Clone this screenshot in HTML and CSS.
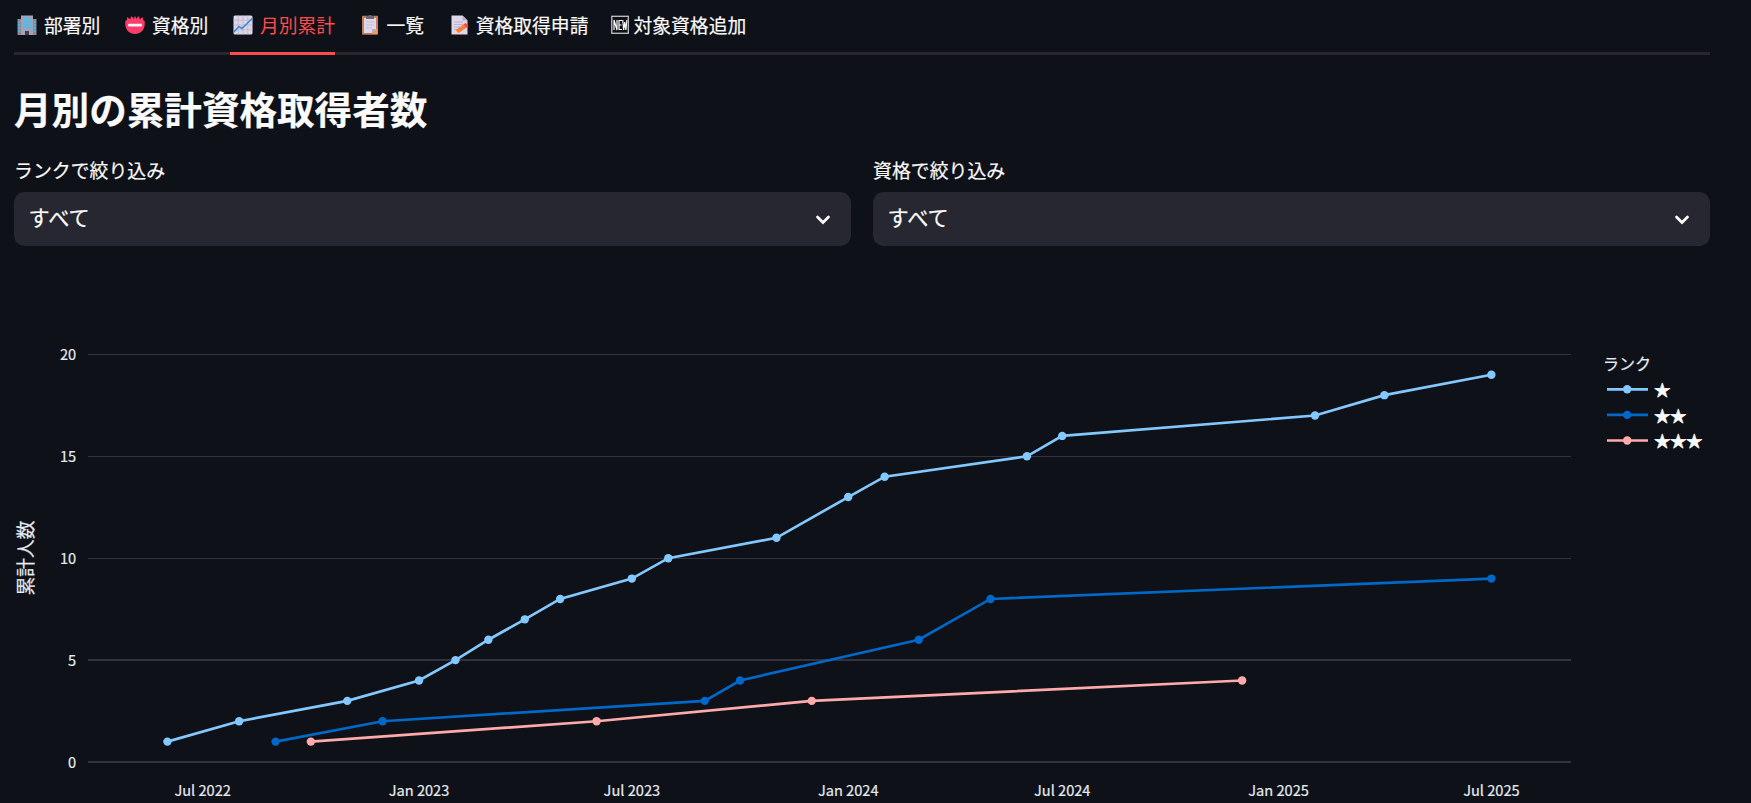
FILE: index.html
```html
<!DOCTYPE html>
<html lang="ja">
<head>
    <meta charset="UTF-8">
    <title>月別の累計資格取得者数</title>
    <link rel="stylesheet" href="styles.css">
</head>
<body>
    <nav class="tabs">
        <div class="tab">
            <svg class="icon" viewBox="0 0 20 20">
                <rect x="0.5" y="4" width="19" height="16" fill="#8b8794"/>
                <rect x="4" y="0.5" width="12" height="19.5" fill="#a7a0b3"/>
                <path d="M1 6h2v2H1zM1 9h2v2H1zM1 12h2v2H1zM1 15h2v2H1zM17 6h2v2h-2zM17 9h2v2h-2zM17 12h2v2h-2zM17 15h2v2h-2z" fill="#40b6e8"/>
                <path d="M6 2.5h2.2v2H6zM9 2.5h2.2v2H9zM12 2.5h2.2v2H12zM6 5.5h2.2v2H6zM9 5.5h2.2v2H9zM12 5.5h2.2v2H12zM6 8.5h2.2v2H6zM9 8.5h2.2v2H9zM12 8.5h2.2v2H12zM6 11.5h2.2v2H6zM9 11.5h2.2v2H9zM12 11.5h2.2v2H12z" fill="#35c5fb"/>
                <rect x="8" y="16" width="4" height="4" fill="#483852"/>
            </svg>
            部署別
        </div>
        <div class="tab">
            <svg class="icon" viewBox="0 0 20 20">
                <path d="M0.300 6 1.800 5.200 2.200 2 5 4.300 6.600 1 8.600 3.800 10 1l1.400 2.800L13.400 1 15 4.300 17.800 2l.4 3.200 1.500.8v4C19 15.500 15.500 19 10 19S1 15.500.300 10z" fill="#fb3d6b"/>
                <rect x="3" y="8.700" width="14" height="2.800" rx="1" fill="#fff0fa"/>
            </svg>
            資格別
        </div>
        <div class="tab tab-active">
            <svg class="icon" viewBox="0 0 20 20">
                <rect x="0.500" y="0.500" width="19" height="19" rx="1.500" fill="#ddd5e8"/>
                <path d="M5.200 0.500v19M10 0.500v19M14.800 0.500v19M0.500 5.200h19M0.500 10h19M0.500 14.800h19" stroke="#bcb1cb" stroke-width="0.700"/>
                <path d="M0.800 17 6 11.500l3 2L19.200 3.500" fill="none" stroke="#348fda" stroke-width="1.700"/>
            </svg>
            月別累計
        </div>
        <div class="tab">
            <svg class="icon" viewBox="0 0 20 20">
                <rect x="2" y="0.800" width="16" height="19" rx="1" fill="#c47c5b"/>
                <path d="M4 3h12v11l-4 4H4z" fill="#ded7ea"/>
                <path d="M12 18v-4h4z" fill="#b9abc9"/>
                <path d="M12 18.500 17.500 13v6H12z" fill="#ed9c5c"/>
                <path d="M6 7h8M6 10h8M6 13h6" stroke="#c7bdd4"/>
                <path d="M6 1h2.500L9 0h2l.5 1H14v3H6z" fill="#6f6672"/>
            </svg>
            一覧
        </div>
        <div class="tab">
            <svg class="icon icon-memo" viewBox="0 0 20 20">
                <path d="M1.500 0.500h11l5 5v14h-16z" fill="#ded6e9"/>
                <path d="M12.500 0.500v5h5z" fill="#b9aec9"/>
                <path d="M4 7h9M4 9.500h9M4 12h6M4 14.500h4" stroke="#bdb2cc"/>
                <path d="m4.500 19 1.200-4 3 3z" fill="#ffd0a0"/>
                <path d="m5.700 15 8.800-6.200 2.500 3.400L8.700 18z" fill="#fa7d3c"/>
                <path d="m13.700 9.400 2-1.700 2.800 3.500-2.100 1.500z" fill="#f24f40"/>
            </svg>
            資格取得申請
        </div>
        <div class="tab">
            <svg class="icon icon-new" viewBox="0 0 18 20">
                <rect x="0.800" y="1.300" width="16.500" height="17" fill="none" stroke="#c4c5c7" stroke-width="1.300"/>
                <path d="M3 15V5l3 10V5M11 5.500H8v9h3M8 10h2.500M11.700 5l1 10 1.100-8 1.100 8 1-10" fill="none" stroke="#fafafa" stroke-width="1.200"/>
            </svg>
            対象資格追加
        </div>
    </nav>

    <h3 class="title">月別の累計資格取得者数</h3>

    <div class="filters">
        <div class="filter">
            <div class="filter-label">ランクで絞り込み</div>
            <div class="select">
                すべて
                <svg class="chevron" viewBox="0 0 16 10"><path d="m2.500 2 5.500 5.500L13.500 2"/></svg>
            </div>
        </div>
        <div class="filter">
            <div class="filter-label">資格で絞り込み</div>
            <div class="select">
                すべて
                <svg class="chevron" viewBox="0 0 16 10"><path d="m2.500 2 5.500 5.500L13.500 2"/></svg>
            </div>
        </div>
    </div>

    <svg id="chart" class="chart" width="1737" height="473"></svg>

    <script src="chart.js"></script>
</body>
</html>
```
FILE: styles.css
```css
* { box-sizing: border-box; }
body { margin: 0; padding: 0 41px 0 14px; height: 803px; overflow: hidden; background: #0e1117; color: #fafafa; font-family: "Noto Sans CJK JP", sans-serif; -webkit-text-stroke: 0.2px; }

.tabs { display: flex; gap: 21.6px; height: 55px; border-bottom: 3px solid #26282d; }
.tab { display: flex; align-items: center; height: 55px; padding-bottom: 7px; font-size: 18.8px; white-space: nowrap; }
.tab-active { color: #ff4b4b; border-bottom: 3px solid #ff4b4b; padding-bottom: 4px; -webkit-text-stroke: 0; }
.icon { width: 20px; height: 20px; margin: 2px 7px 0 3px; }
.icon-memo { margin-left: 4px; margin-right: 6px; }
.icon-new { width: 18px; margin: 2px 4.5px 0 1px; }

.title { margin: 30px 0 0; font-size: 37.6px; line-height: 45px; font-weight: 700; }

.filters { display: flex; gap: 22px; margin-top: 26px; }
.filter { flex: 1; }
.filter-label { height: 36px; font-size: 18.9px; line-height: 28px; }
.select { display: flex; justify-content: space-between; align-items: center; height: 54px; padding: 0 20px 5px 14.5px; border-radius: 10.67px; background: #262730; font-size: 21.2px; }
.chevron { width: 16px; height: 10px; margin-top: 6px; fill: none; stroke: #fafafa; stroke-width: 2.8; stroke-linecap: round; }

.chart { display: block; margin-top: 84px; overflow: visible; }
.grid-line { stroke: #31333f; stroke-width: 1; }
.grid-line-bold { stroke-width: 2; }
.axis-label, .axis-title, .legend-title { fill: #e6eaf1; stroke: #e6eaf1; stroke-width: 0.2px; }
.axis-label { font-size: 14.6px; }
.axis-title { font-size: 18.8px; }
.legend-title { font-size: 16px; }
.legend-label { fill: #fafafa; stroke: #fafafa; stroke-width: 0.7px; font-size: 16px; }
.series { fill: none; stroke-width: 2.67; }
```
FILE: chart.js
```js
const chart = document.getElementById('chart');

const LEFT = 74;
const RIGHT = 1557;
const BOTTOM = 432;
const UNIT = 20.38;
const START = Date.UTC(2022, 5, 1);
const DAY = 24 * 60 * 60 * 1000;

const series = [
    {
        name: '★',
        color: '#83c9ff',
        data: [['2022-06', 1], ['2022-08', 2], ['2022-11', 3], ['2023-01', 4], ['2023-02', 5], ['2023-03', 6],
            ['2023-04', 7], ['2023-05', 8], ['2023-07', 9], ['2023-08', 10], ['2023-11', 11], ['2024-01', 13],
            ['2024-02', 14], ['2024-06', 15], ['2024-07', 16], ['2025-02', 17], ['2025-04', 18], ['2025-07', 19]]
    },
    {
        name: '★★',
        color: '#0068c9',
        data: [['2022-09', 1], ['2022-12', 2], ['2023-09', 3], ['2023-10', 4], ['2024-03', 6], ['2024-05', 8], ['2025-07', 9]]
    },
    {
        name: '★★★',
        color: '#ffabab',
        data: [['2022-10', 1], ['2023-06', 2], ['2023-12', 3], ['2024-12', 4]]
    }
];

function add(tag, attrs, text) {
    const el = document.createElementNS('http://www.w3.org/2000/svg', tag);
    for (const key in attrs) el.setAttribute(key, attrs[key]);
    if (text) el.textContent = text;
    chart.appendChild(el);
}

function xPos(month) {
    return 153.4 + (Date.parse(month + '-01') - START) / DAY * 1.17584;
}

function yPos(value) {
    return BOTTOM - value * UNIT;
}

// y axis
[[0, 432], [5, 330], [10, 228.5], [15, 126.5], [20, 24.5]].forEach(([value, y]) => {
    const bold = value <= 5 ? ' grid-line-bold' : '';
    add('line', { x1: LEFT, x2: RIGHT, y1: y, y2: y, class: 'grid-line' + bold });
    add('text', { x: 62.2, y: y + 5.7, 'text-anchor': 'end', class: 'axis-label' }, String(value));
});
add('text', { transform: 'translate(19 228) rotate(-90)', 'text-anchor': 'middle', class: 'axis-title' }, '累計人数');

// x axis
[['2022-07', 'Jul 2022'], ['2023-01', 'Jan 2023'], ['2023-07', 'Jul 2023'], ['2024-01', 'Jan 2024'],
    ['2024-07', 'Jul 2024'], ['2025-01', 'Jan 2025'], ['2025-07', 'Jul 2025']].forEach(([month, label]) => {
    add('text', { x: xPos(month), y: 466, 'text-anchor': 'middle', class: 'axis-label' }, label);
});

series.forEach(s => {
    const points = s.data.map(([month, value]) => [xPos(month), yPos(value)]);
    add('polyline', { points: points.join(' '), stroke: s.color, class: 'series' });
    points.forEach(([x, y]) => add('circle', { cx: x, cy: y, r: 4.2, fill: s.color }));
});

// legend
add('text', { x: 1589, y: 40, class: 'legend-title' }, 'ランク');
series.forEach((s, i) => {
    const y = 59.3 + i * 25.6;
    add('line', { x1: 1593, x2: 1634, y1: y, y2: y, stroke: s.color, class: 'series' });
    add('circle', { cx: 1613.2, cy: y, r: 4.2, fill: s.color });
    add('text', { x: 1640.3, y: y + 6.7, class: 'legend-label' }, s.name);
});
```
